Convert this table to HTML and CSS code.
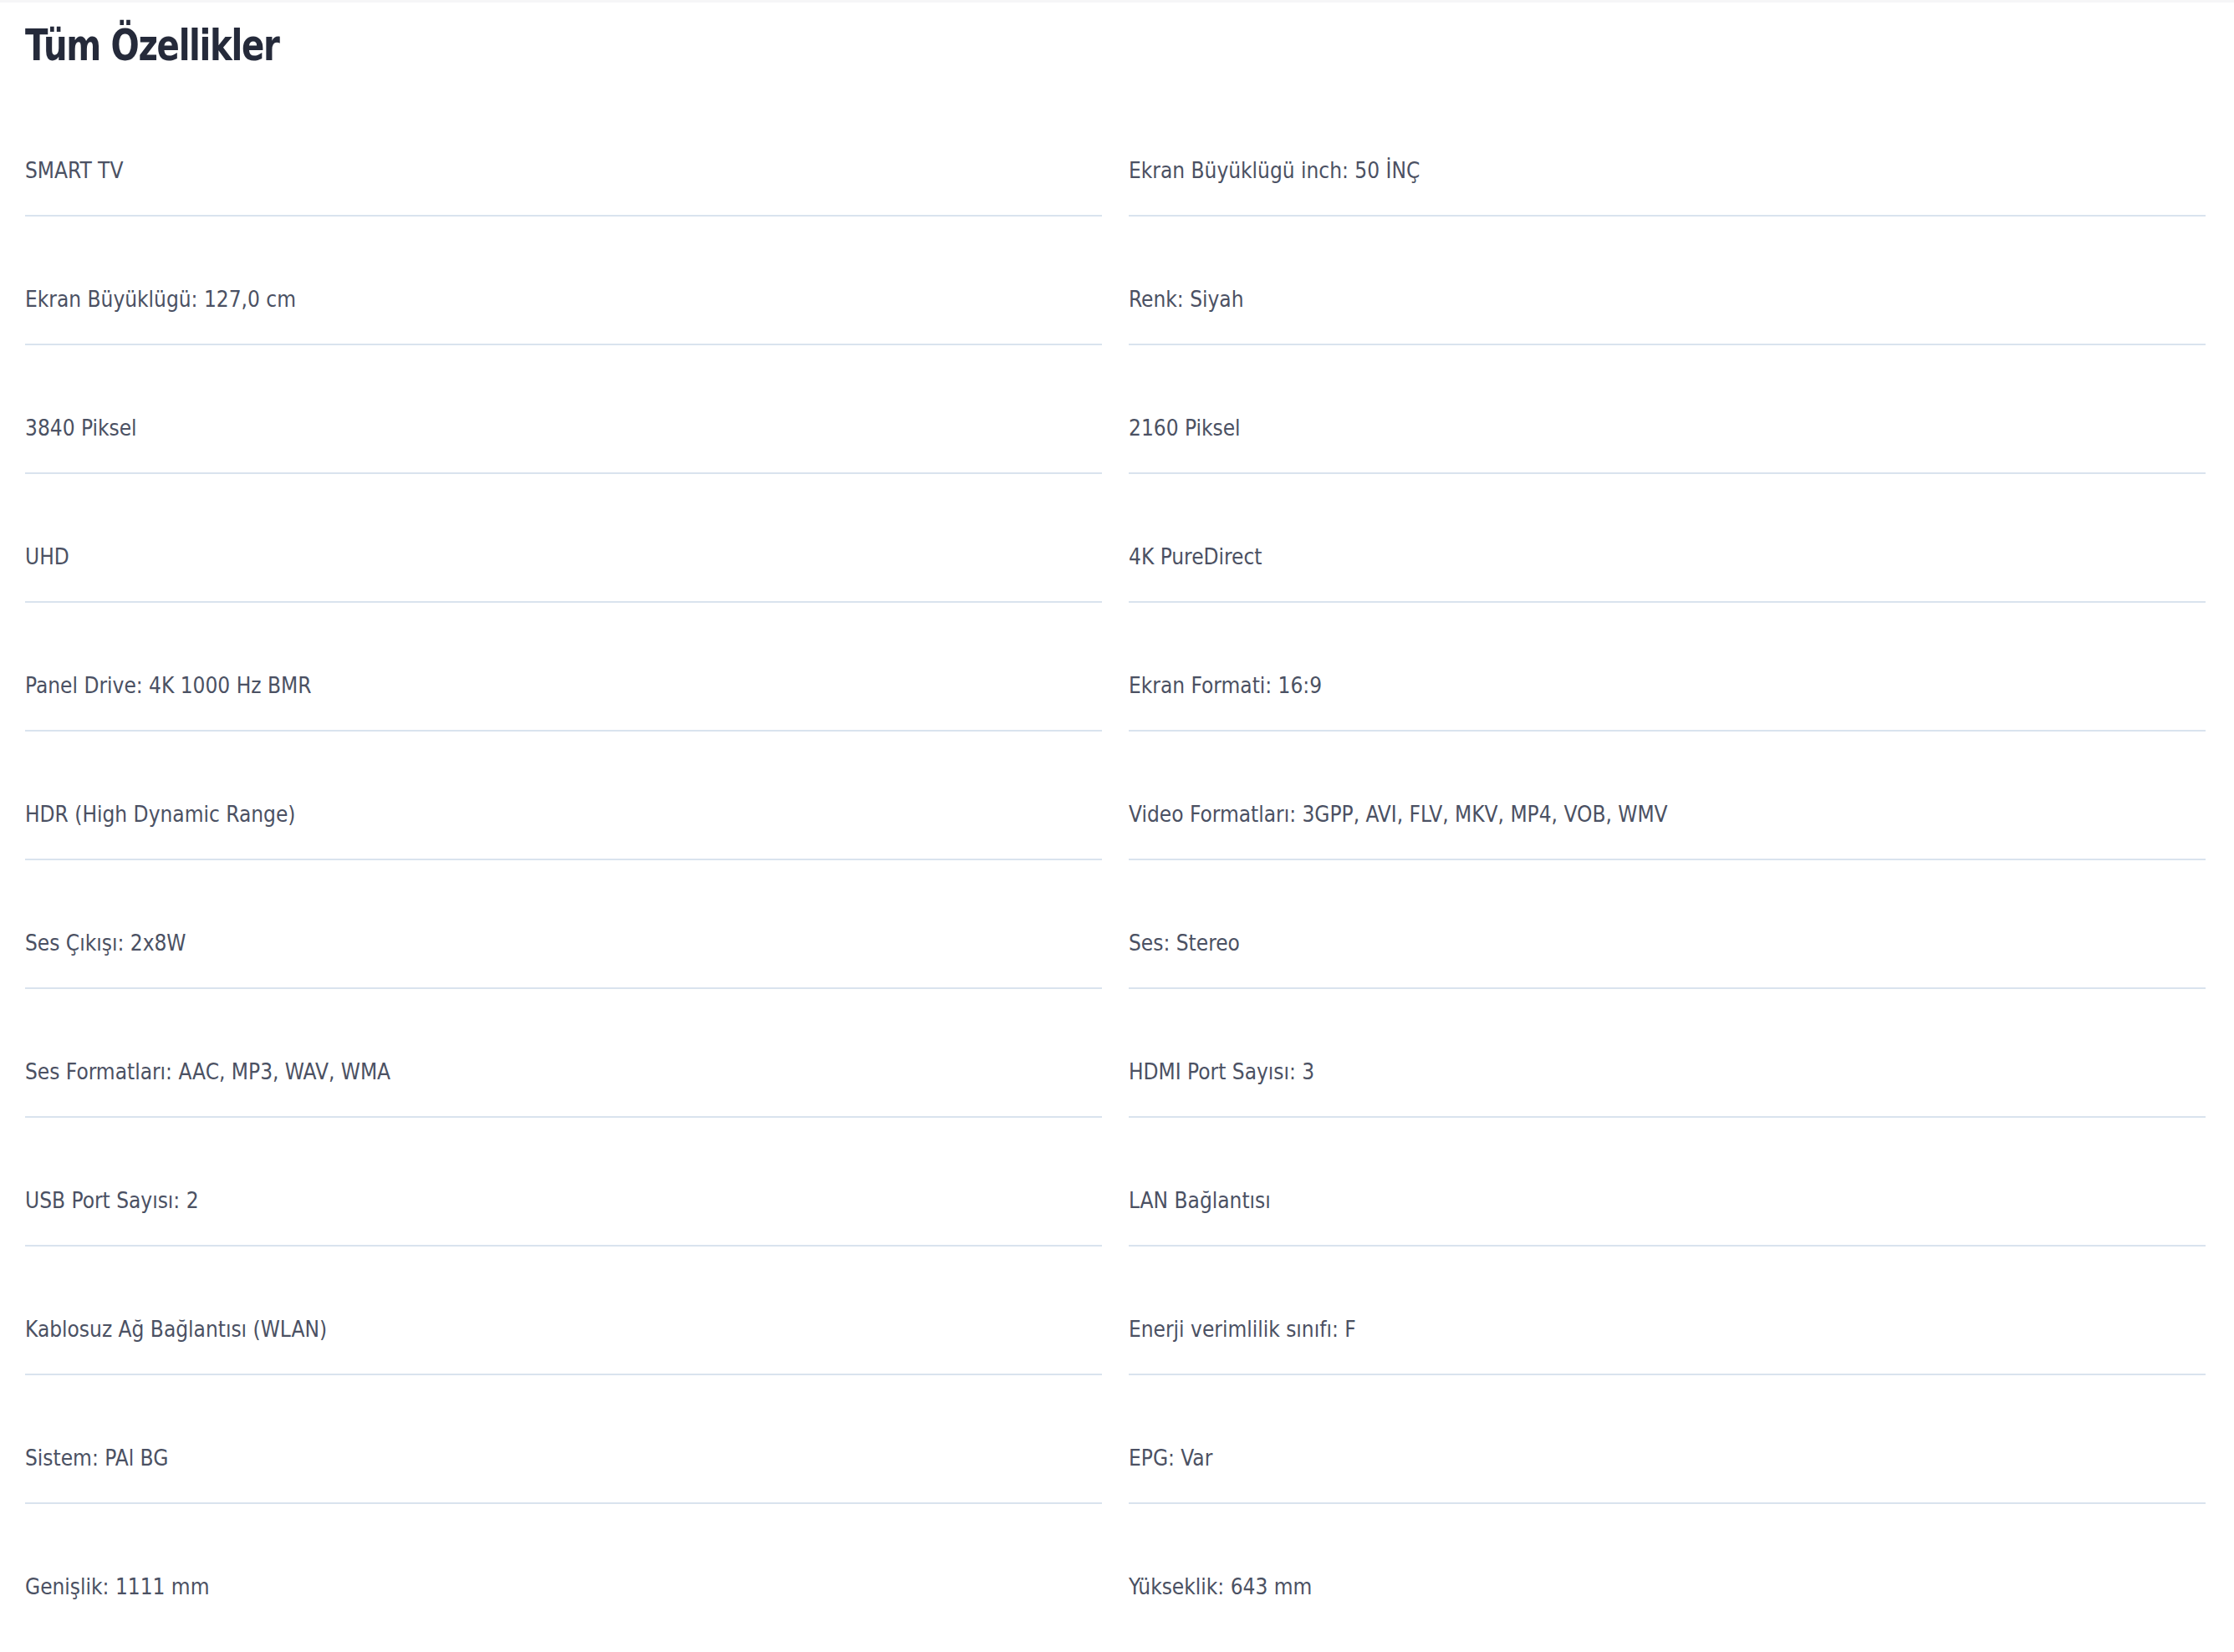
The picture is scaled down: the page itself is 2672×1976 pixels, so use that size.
FILE: index.html
```html
<!DOCTYPE html>
<html lang="tr">
<head>
  <meta charset="utf-8">
  <title>Tüm Özellikler</title>
  <link rel="stylesheet" href="styles.css">
</head>
<body>
  <section class="specs">
    <h2 class="specs-title">Tüm Özellikler</h2>
    <ul class="spec-list">
      <li class="spec">SMART TV</li>
      <li class="spec">Ekran Büyüklügü inch: 50 İNÇ</li>
      <li class="spec">Ekran Büyüklügü: 127,0 cm</li>
      <li class="spec">Renk: Siyah</li>
      <li class="spec">3840 Piksel</li>
      <li class="spec">2160 Piksel</li>
      <li class="spec">UHD</li>
      <li class="spec">4K PureDirect</li>
      <li class="spec">Panel Drive: 4K 1000 Hz BMR</li>
      <li class="spec">Ekran Formati: 16:9</li>
      <li class="spec">HDR (High Dynamic Range)</li>
      <li class="spec">Video Formatları: 3GPP, AVI, FLV, MKV, MP4, VOB, WMV</li>
      <li class="spec">Ses Çıkışı: 2x8W</li>
      <li class="spec">Ses: Stereo</li>
      <li class="spec">Ses Formatları: AAC, MP3, WAV, WMA</li>
      <li class="spec">HDMI Port Sayısı: 3</li>
      <li class="spec">USB Port Sayısı: 2</li>
      <li class="spec">LAN Bağlantısı</li>
      <li class="spec">Kablosuz Ağ Bağlantısı (WLAN)</li>
      <li class="spec">Enerji verimlilik sınıfı: F</li>
      <li class="spec">Sistem: PAl BG</li>
      <li class="spec">EPG: Var</li>
      <li class="spec">Genişlik: 1111 mm</li>
      <li class="spec">Yükseklik: 643 mm</li>
    </ul>
  </section>
</body>
</html>
```

FILE: styles.css
```css
body {
  margin: 0;
  background: #fff;
  font-family: "Liberation Sans Narrow", "DejaVu Sans Condensed", "Liberation Sans", sans-serif;
  font-stretch: condensed;
}

.specs {
  border-top: 3px solid #f6f6f7;
  padding: 20px 34px 0 30px;
}

.specs-title {
  margin: 0 0 20px;
  font-size: 52px;
  line-height: 62px;
  font-weight: 700;
  letter-spacing: -1.5px;
  color: #252a3a;
  transform: scaleX(0.86);
  transform-origin: left center;
}

.spec-list {
  list-style: none;
  margin: 0;
  padding: 0;
  display: grid;
  grid-template-columns: 1fr 1fr;
  column-gap: 32px;
}

.spec {
  padding: 81px 0 35px;
  font-size: 26px;
  line-height: 36px;
  color: #4b5163;
  border-bottom: 2px solid #d9e3ee;
}

.spec:nth-last-child(-n+2) {
  border-bottom: none;
}
```
